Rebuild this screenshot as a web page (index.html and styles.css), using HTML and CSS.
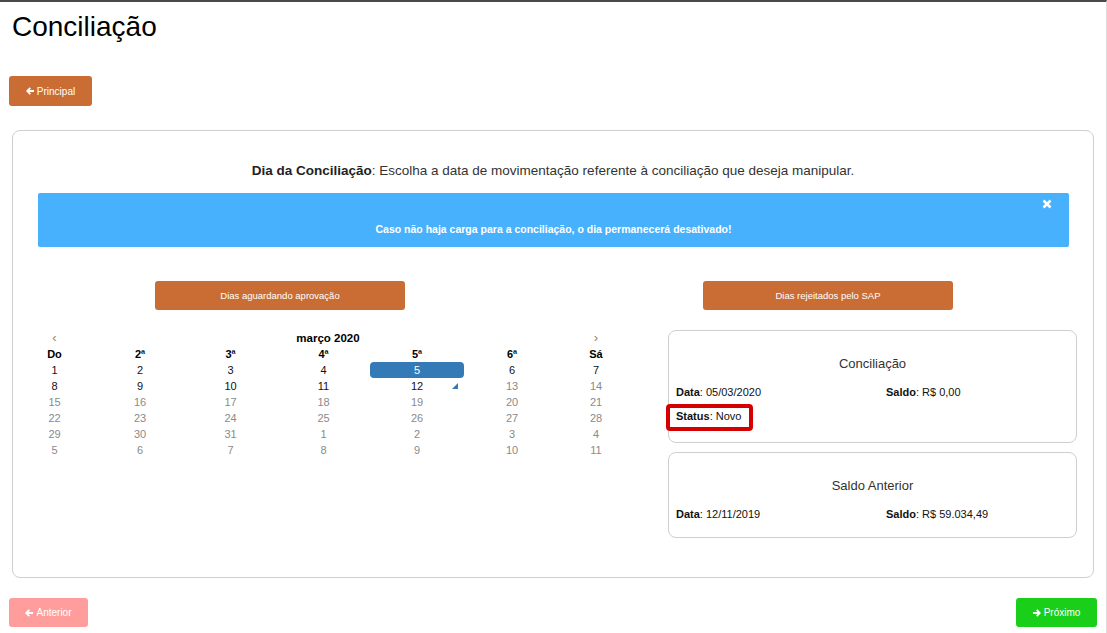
FILE: index.html
```html
<!DOCTYPE html>
<html lang="pt-BR">
<head>
<meta charset="utf-8">
<title>Conciliação</title>
<link rel="stylesheet" href="styles.css">
</head>
<body>
<div class="page">
  <h1 class="title">Conciliação</h1>
  <button class="btn btn-orange btn-main">
    <svg class="ico" viewBox="0 0 10 10"><path d="M0 5 L4.6 0.4 L6.2 2 L4.3 3.9 H10 V6.1 H4.3 L6.2 8 L4.6 9.6 Z"/></svg>Principal
  </button>

  <section class="panel">
    <p class="lead"><b>Dia da Conciliação</b>: Escolha a data de movimentação referente à conciliação que deseja manipular.</p>
    <div class="alert">
      <svg class="alert-close" viewBox="0 0 10 10"><path d="M1.5 1.5 L8.5 8.5 M8.5 1.5 L1.5 8.5"/></svg>
      <p class="alert-text">Caso não haja carga para a conciliação, o dia permanecerá desativado!</p>
    </div>

    <div class="actions">
      <button class="btn btn-orange btn-wide btn-left">Dias aguardando aprovação</button>
      <button class="btn btn-orange btn-wide btn-right">Dias rejeitados pelo SAP</button>
    </div>

    <div class="content">
      <div class="cal">
        <span class="cal-nav">&#x2039;</span>
        <span class="cal-month">março 2020</span>
        <span class="cal-nav">&#x203A;</span>

        <span class="dow">Do</span><span class="dow">2ª</span><span class="dow">3ª</span><span class="dow">4ª</span><span class="dow">5ª</span><span class="dow">6ª</span><span class="dow">Sá</span>

        <span class="d on">1</span><span class="d on">2</span><span class="d on">3</span><span class="d on">4</span><span class="d sel">5</span><span class="d on">6</span><span class="d on">7</span>
        <span class="d on">8</span><span class="d on">9</span><span class="d on">10</span><span class="d on">11</span><span class="d on today">12</span><span class="d">13</span><span class="d">14</span>
        <span class="d">15</span><span class="d">16</span><span class="d">17</span><span class="d">18</span><span class="d">19</span><span class="d">20</span><span class="d">21</span>
        <span class="d">22</span><span class="d">23</span><span class="d">24</span><span class="d">25</span><span class="d">26</span><span class="d">27</span><span class="d">28</span>
        <span class="d">29</span><span class="d">30</span><span class="d">31</span><span class="d">1</span><span class="d">2</span><span class="d">3</span><span class="d">4</span>
        <span class="d">5</span><span class="d">6</span><span class="d">7</span><span class="d">8</span><span class="d">9</span><span class="d">10</span><span class="d">11</span>
      </div>

      <div class="cards">
        <div class="card">
          <h2 class="card-title">Conciliação</h2>
          <div class="card-row">
            <span><b>Data</b>: 05/03/2020</span>
            <span><b>Saldo</b>: R$ 0,00</span>
          </div>
          <div class="card-row card-row-last">
            <span class="status"><b>Status</b>: Novo</span>
          </div>
        </div>
        <div class="card">
          <h2 class="card-title">Saldo Anterior</h2>
          <div class="card-row">
            <span><b>Data</b>: 12/11/2019</span>
            <span><b>Saldo</b>: R$ 59.034,49</span>
          </div>
        </div>
      </div>
    </div>
  </section>

  <div class="nav">
    <button class="btn btn-prev">
      <svg class="ico" viewBox="0 0 10 10"><path d="M0 5 L4.6 0.4 L6.2 2 L4.3 3.9 H10 V6.1 H4.3 L6.2 8 L4.6 9.6 Z"/></svg>Anterior
    </button>
    <button class="btn btn-next">
      <svg class="ico" viewBox="0 0 10 10"><path d="M10 5 L5.4 0.4 L3.8 2 L5.7 3.9 H0 V6.1 H5.7 L3.8 8 L5.4 9.6 Z"/></svg>Próximo
    </button>
  </div>
</div>
</body>
</html>
```

FILE: styles.css
```css
* { box-sizing: border-box; }

html, body {
  margin: 0;
  padding: 0;
  background: #fff;
}

body {
  font-family: "Liberation Sans", Arial, sans-serif;
  color: #000;
}

.page {
  width: 1107px;
  height: 633px;
  border-top: 2px solid #4a4a4a;
  border-right: 1px solid #dcdcdc;
  padding: 0 9px;
  overflow: hidden;
}

.title {
  margin: 9px 0 0 3px;
  font-size: 28px;
  line-height: 32px;
  font-weight: normal;
  color: #000;
}

.btn {
  display: inline-flex;
  align-items: center;
  justify-content: center;
  border: none;
  border-radius: 3px;
  color: #fff;
  font-family: "Liberation Sans", Arial, sans-serif;
  font-size: 10px;
  padding: 0;
  cursor: pointer;
}

.ico {
  width: 8px;
  height: 8px;
  fill: #fff;
  margin-right: 3px;
}

.btn-orange { background: #c96d34; }

.btn-main {
  margin-top: 33px;
  width: 83px;
  height: 30px;
}

.panel {
  margin: 24px 3px 0 3px;
  height: 448px;
  border: 1px solid #cfcfcf;
  border-radius: 8px;
  padding: 30px 0 0 0;
}

.lead {
  margin: 0;
  text-align: center;
  font-size: 13.5px;
  line-height: 20px;
  color: #333;
}

.lead b { color: #222; }

.alert {
  position: relative;
  margin: 12px 24px 0 25px;
  height: 54px;
  background: #48b1fe;
  border-radius: 2px;
  padding: 28px 15px 0;
}

.alert-close {
  position: absolute;
  top: 6px;
  right: 17px;
  width: 10px;
  height: 10px;
  stroke: #fff;
  stroke-width: 2.6;
  fill: none;
}

.alert-text {
  margin: 0;
  text-align: center;
  color: #fff;
  font-weight: bold;
  font-size: 10.5px;
  line-height: 16px;
}

.actions {
  display: flex;
  margin-top: 34px;
}

.btn-wide {
  width: 250px;
  height: 29px;
  font-size: 9.5px;
}

.btn-left { margin-left: 142px; }
.btn-right { margin-left: 298px; }

.content {
  display: flex;
  align-items: flex-start;
  margin-top: 20px;
}

.cal {
  width: 619px;
  display: grid;
  grid-template-columns: 83px 88px 93px 93px 94px 96px 72px;
  grid-auto-rows: 16px;
  font-size: 11px;
  line-height: 16px;
  text-align: center;
}

.cal-nav {
  color: #888;
  font-size: 13px;
}

.cal-month {
  grid-column: 2 / span 5;
  font-weight: bold;
  font-size: 11.5px;
}

.dow {
  font-weight: bold;
  color: #000;
}

.d {
  position: relative;
  color: #8a8a8a;
}

.d.on { color: #111; }

.d.sel {
  background: #337ab7;
  color: #fff;
  border-radius: 4px;
}

.d.today::after {
  content: "";
  position: absolute;
  right: 6px;
  bottom: 5px;
  width: 0;
  height: 0;
  border-left: 6px solid transparent;
  border-bottom: 6px solid #337ab7;
}

.cards {
  margin-left: 36px;
  width: 409px;
  display: flex;
  flex-direction: column;
  gap: 9px;
}

.card {
  border: 1px solid #cfcfcf;
  border-radius: 8px;
  padding: 24px 7px 15px;
  font-size: 11px;
  line-height: 16px;
}

.card-title {
  margin: 0 0 11px;
  font-size: 13px;
  line-height: 18px;
  font-weight: normal;
  text-align: center;
  color: #333;
}

.card-row {
  display: grid;
  grid-template-columns: 210px 1fr;
  color: #111;
}

.card-row + .card-row { margin-top: 8px; }

.card-row-last { margin-bottom: 3px; }

.status {
  position: relative;
}

.status::before {
  content: "";
  position: absolute;
  left: -10px;
  top: -4px;
  width: 87px;
  height: 27px;
  border: 4px solid #d40000;
  border-radius: 4px;
  box-sizing: border-box;
}

.nav {
  display: flex;
  justify-content: space-between;
  margin-top: 20px;
}

.btn-prev {
  width: 79px;
  height: 29px;
  background: #ff9d9d;
}

.btn-next {
  width: 81px;
  height: 29px;
  background: #19cf19;
}
```
